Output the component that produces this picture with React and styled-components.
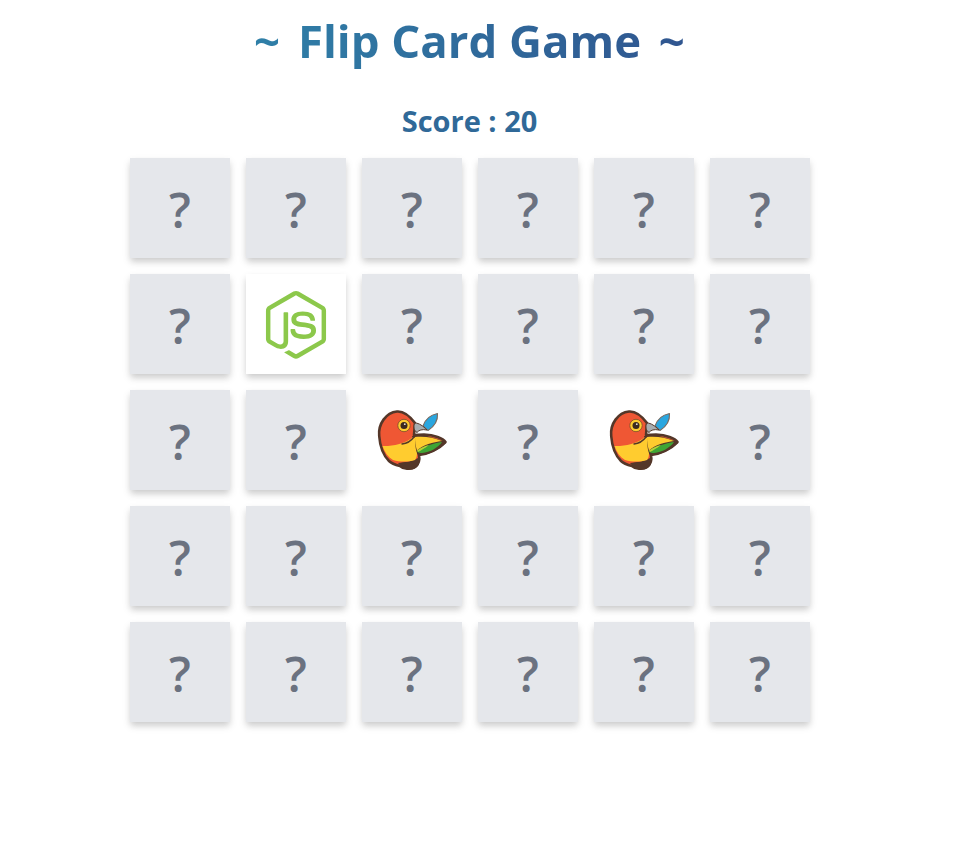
import React from 'react'
import styled, { createGlobalStyle } from 'styled-components'
import { DiNodejsSmall } from 'react-icons/di'

const GlobalStyle = createGlobalStyle`
  html, body {
    margin: 0;
    padding: 0;
    background: #fff;
    font-family: "Open Sans", "Noto Sans", "Liberation Sans", sans-serif;
  }
`

const Page = styled.div`
  width: 939px;
  height: 861px;
  display: flex;
  flex-direction: column;
  align-items: center;
`

const Title = styled.h1`
  margin: 11px 0 0;
  height: 58px;
  line-height: 58px;
  font-size: 45.5px;
  font-weight: 700;
  text-align: center;
  color: transparent;
  background: linear-gradient(to right, #2f80a8, #30558f);
  -webkit-background-clip: text;
  background-clip: text;
`

const Tilde = styled.span`
  margin: 0 6px;
`

const Score = styled.h2`
  margin: 34px 0 0;
  height: 36px;
  line-height: 36px;
  font-size: 29px;
  font-weight: 700;
  color: #306998;
`

const Board = styled.div`
  margin-top: 19px;
  display: grid;
  grid-template-columns: repeat(6, 100px);
  grid-auto-rows: 100px;
  gap: 16px;
`

const cardShadow = '0 4px 6px -1px rgba(0,0,0,.1), 0 4px 8px rgba(0,0,0,.12)'

const Card = styled.div`
  display: flex;
  align-items: center;
  justify-content: center;
  background: ${p => (p.$kind ? '#fff' : '#e5e7eb')};
  box-shadow: ${p => (p.$kind === 'bower' ? 'none' : cardShadow)};
`

const Mark = styled.span`
  padding: 3px 0 0 1px;
  font-size: 48px;
  font-weight: 600;
  color: #6b7280;
`

const NodeIcon = styled(DiNodejsSmall)`
  width: 86px;
  height: 86px;
  margin: -1px 0 0 1px;
  color: #8cc84b;
`

const BowerBird = () => (
  <svg width="100" height="100" viewBox="0 0 100 100">
    {/* body, with the brown outline */}
    <path
      fill="#ef5734"
      stroke="#543729"
      strokeWidth="2.6"
      strokeLinejoin="round"
      d="M53 33C47 25 41 21 35 21.5C24 22.5 16 34 17.2 46C18 57 22 66 27 71C30 74 34 75 38 76C41 79 49 80 53 77C57 74 58 70 57 65C66 64 77 59 83.5 52C81 48 72 45 62 44.5L52 45Z"
    />
    {/* wing filled brown underneath */}
    <path fill="#543729" d="M50 46L62 45L82 51L84 53C77 60 66 65 57 65.5L52 62Z" />
    {/* tail shadow */}
    <path fill="#543729" d="M36 73C42 72 50 72 56 68C59 72 57 77 52 79C46 81 40 79 36 73Z" />
    {/* yellow belly */}
    <path
      fill="#ffcc2f"
      d="M20.5 56C29 56.5 43 54 51 47L53.5 48C53 53 53.5 60 55 63C55 66 54.5 68 53 70C46 72 38 72 31 70C26 67 22.5 62 20.5 56Z"
    />
    {/* wing yellow and green */}
    <path fill="#ffcc2f" d="M53 47C62 46 72 47.5 80 51C71 52 61 55 55 60.5C53.5 56 53 51 53 47Z" />
    <path fill="#3fa535" d="M55 61.5C62 56.5 71 53 80 52C76 58 68 62 60 63C58 63 56 62.5 55 61.5Z" />
    <path fill="#b5d334" d="M55 60.5C59 57.5 63 56 67 55C63 58 59 60.5 56 62Z" />
    {/* neck line */}
    <path fill="none" stroke="#543729" strokeWidth="1.4" strokeLinecap="round" d="M40 54C45 53.5 49 51 52 47" />
    {/* feather */}
    <path
      fill="#2aa6df"
      stroke="#7a6a60"
      strokeWidth="1.1"
      strokeLinejoin="round"
      d="M61 36C63 30 68 25 75.5 23.5C76 30 73 36 66 40.5Z"
    />
    {/* beak */}
    <path
      fill="#a7adb0"
      stroke="#543729"
      strokeWidth="1"
      strokeLinejoin="round"
      d="M53 33C57 33 61 36 65 40C60 39 57 40 55 42.5C52 41 51 36 53 33Z"
    />
    {/* eye */}
    <circle cx="42" cy="35.5" r="6.2" fill="#ffcc2f" stroke="#7a4a2a" strokeWidth="0.8" />
    <circle cx="42" cy="35.5" r="3.5" fill="#3b2a20" />
    <circle cx="42.8" cy="34.2" r="0.9" fill="#e8e0d8" />
  </svg>
)

const open = {
  7: 'node',
  14: 'bower',
  16: 'bower',
}

export default function App() {
  return (
    <Page>
      <GlobalStyle />
      <Title>
        <Tilde>~</Tilde> Flip Card Game <Tilde>~</Tilde>
      </Title>
      <Score>Score : 20</Score>
      <Board>
        {Array.from({ length: 30 }, (_, i) => (
          <Card key={i} $kind={open[i]}>
            {open[i] === 'node' && <NodeIcon />}
            {open[i] === 'bower' && <BowerBird />}
            {!open[i] && <Mark>?</Mark>}
          </Card>
        ))}
      </Board>
    </Page>
  )
}
